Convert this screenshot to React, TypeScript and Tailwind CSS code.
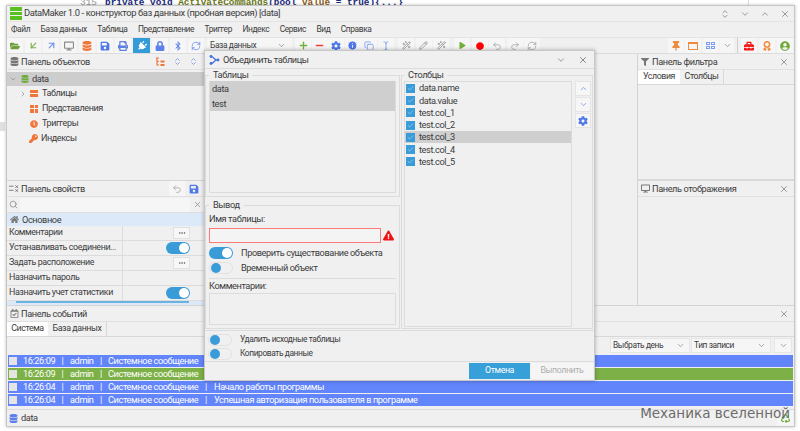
// DataMaker — главное окно и диалог "Объединить таблицы"
import type { ReactNode } from "react";
import {
  ArrowDownLeft,
  ArrowUpRight,
  Check,
  ChevronDown,
  ChevronRight,
  ChevronUp,
  ChevronsUpDown,
  Copy,
  Ellipsis,
  Info,
  Minus,
  Pencil,
  Plus,
  Redo2,
  RefreshCw,
  Search,
  TextCursor,
  Undo2,
  WandSparkles,
  X,
} from "lucide-react";
import {
  FaBluetoothB,
  FaClock,
  FaCog,
  FaDatabase,
  FaDesktop,
  FaExclamationTriangle,
  FaFilter,
  FaFolderOpen,
  FaHome,
  FaKey,
  FaLock,
  FaPlay,
  FaPlug,
  FaPrint,
  FaRecycle,
  FaRegCalendarCheck,
  FaSave,
  FaThumbtack,
  FaToolbox,
  FaUserCircle,
  FaAward,
  FaCircle,
} from "react-icons/fa";

const MENU = ["Файл", "База данных", "Таблица", "Представление", "Триггер", "Индекс", "Сервис", "Вид", "Справка"];
const PROPS: Array<{ label: string; kind?: "more" | "on" }> = [
  { label: "Комментарии", kind: "more" },
  { label: "Устанавливать соединени...", kind: "on" },
  { label: "Задать расположение", kind: "more" },
  { label: "Назначить пароль" },
  { label: "Назначить учет статистики", kind: "on" },
];
const EVENTS = [
  { time: "16:26:09", text: "", color: "bg-[#6285fc]" },
  { time: "16:26:09", text: "", color: "bg-[#7db046]" },
  { time: "16:26:04", text: "Начало работы программы", color: "bg-[#6285fc]" },
  { time: "16:26:04", text: "Успешная авторизация пользователя в программе", color: "bg-[#6285fc]" },
];
const COLUMNS = ["data.name", "data.value", "test.col_1", "test.col_2", "test.col_3", "test.col_4", "test.col_5"];

// значок объединения: две линии сходятся в одну
function JoinIcon() {
  return (
    <svg width="11" height="10" viewBox="0 0 11 10" fill="none">
      <path d="M2 1.5 C5 1.5 5 5 8 5 C5 5 5 8.5 2 8.5" stroke="#3f6fe0" strokeWidth="1.2" />
      <circle cx="2" cy="1.5" r="1.4" fill="#3f6fe0" />
      <circle cx="2" cy="8.5" r="1.4" fill="#3f6fe0" />
      <circle cx="9" cy="5" r="1.4" fill="#3f6fe0" />
    </svg>
  );
}

function TreeIcon() {
  return (
    <svg width="11" height="10" viewBox="0 0 11 10" fill="none" stroke="#f2763a" strokeWidth="1.2">
      <path d="M1 1h3M2 1v7h2M2 4.5h2" />
      <rect x="5.5" y="3.5" width="4" height="2" fill="#f2763a" stroke="none" />
      <rect x="5.5" y="7" width="4" height="2" fill="#f2763a" stroke="none" />
    </svg>
  );
}

function PropsIcon() {
  return (
    <svg width="11" height="9" viewBox="0 0 11 9" fill="none" stroke="#777" strokeWidth="1">
      <path d="M0 2h5M0 6.5h5M7 1l3 3M10 1l-3 3M7 5.5l3 2.5M10 5.5l-3 2.5" />
    </svg>
  );
}

function Btn({ children, wide }: { children?: ReactNode; wide?: boolean }) {
  return (
    <div className={`${wide ? "w-[17px] bg-[#359bd8]" : "w-[16px] bg-[#f6f6f6]"} h-[15px] shrink-0 flex items-center justify-center`}>
      {children}
    </div>
  );
}

function PanelHeader({ icon, title, children }: { icon: ReactNode; title: string; children?: ReactNode }) {
  return (
    <div className="h-[16px] shrink-0 flex items-center pl-[2px] pr-[5px] gap-[2px] border-b border-[#e0e0e0]">
      <span className="w-[10px] flex justify-center">{icon}</span>
      <span className="flex-1">{title}</span>
      {children}
    </div>
  );
}

function Toggle({ on }: { on?: boolean }) {
  return on ? (
    <div className="w-[24px] h-[12px] rounded-full bg-[#3a9bd9] flex items-center justify-end pr-px shrink-0">
      <div className="w-[10px] h-[10px] rounded-full bg-white" />
    </div>
  ) : (
    <div className="w-[24px] h-[12px] rounded-full border border-[#e2e2e2] flex items-center pl-px shrink-0">
      <div className="w-[10px] h-[10px] rounded-full bg-[#3a9bd9]" />
    </div>
  );
}

function Tabs({ items }: { items: Array<[string, string]> }) {
  return (
    <div className="h-[15px] shrink-0 flex border-b border-[#d8d8d8] text-[8.8px]">
      {items.map(([label, w], i) => (
        <div
          key={label}
          style={{ width: w }}
          className={`flex items-center justify-center ${i === 0 ? "bg-white" : "border-r border-[#d8d8d8]"}`}
        >
          {label}
        </div>
      ))}
    </div>
  );
}

function Toolbar() {
  return (
    <div className="h-[16px] shrink-0 flex items-center pr-[1px] border-b border-[#dcdcdc]">
      <div className="flex gap-[2px]">
        <Btn><FaFolderOpen size={10} color="#6f9e3c" /></Btn>
        <Btn><ArrowDownLeft size={11} color="#7fb04a" strokeWidth={2.5} /></Btn>
        <Btn><ArrowUpRight size={11} color="#6d8ff0" strokeWidth={2.5} /></Btn>
        <Btn><FaDesktop size={10} color="#8a8a8a" /></Btn>
        <Btn><FaDatabase size={10} color="#f2763a" /></Btn>
        <Btn><FaSave size={10} color="#4f78e8" /></Btn>
        <Btn><FaPrint size={10} color="#5f80e0" /></Btn>
        <Btn wide><FaPlug size={10} color="white" className="rotate-45" /></Btn>
        <Btn><FaLock size={10} color="#5f80e8" /></Btn>
        <Btn><FaBluetoothB size={10} color="#5f80e8" /></Btn>
        <Btn><RefreshCw size={10} color="#6d8ff0" /></Btn>
      </div>
      <div className="ml-[3px] w-[85px] h-[15px] bg-[#f6f6f6] flex items-center justify-between pl-[3px] pr-[6px] text-[8.4px]">
        <span>База данных</span>
        <ChevronDown size={9} color="#888" />
      </div>
      <div className="ml-[3px] flex gap-[0.5px]">
        <Btn><Plus size={11} color="#74b03c" strokeWidth={3} /></Btn>
        <Btn><Minus size={11} color="#ee4040" strokeWidth={3} /></Btn>
        <Btn><FaCog size={10} color="#4f78e8" /></Btn>
        <Btn><Info size={11} color="white" fill="#4f78e8" /></Btn>
        <Btn><Copy size={10} color="#7d9ef0" /></Btn>
        <Btn><TextCursor size={10} color="#7d9ef0" /></Btn>
      </div>
      <div className="ml-[4.5px] flex gap-[1.5px]">
        <Btn><WandSparkles size={9} color="#8c8c8c" /></Btn>
        <Btn><Pencil size={9} color="#8c8c8c" /></Btn>
        <Btn><WandSparkles size={9} color="#8c8c8c" /></Btn>
      </div>
      <div className="ml-[5px] flex gap-[1.5px]">
        <Btn><FaPlay size={7} color="#74b03c" /></Btn>
        <Btn><FaCircle size={8} color="#f00" /></Btn>
        <Btn><Undo2 size={10} color="#a8a8a8" /></Btn>
        <Btn><Redo2 size={10} color="#a8a8a8" /></Btn>
        <Btn><RefreshCw size={10} color="#a8a8a8" /></Btn>
      </div>
      <div className="flex-1" />
      <div className="flex gap-[1.5px]">
        <Btn><FaThumbtack size={10} color="#f08a3c" /></Btn>
        <Btn><div className="w-[10px] h-[8px] border border-[#f08a3c] border-t-[2px]" /></Btn>
        <Btn>
          <div className="grid grid-cols-2 gap-px">
            <div className="w-[4px] h-[3px] border border-[#7d9ef0]" />
            <div className="w-[4px] h-[3px] border border-[#7d9ef0]" />
            <div className="w-[4px] h-[3px] border border-[#7d9ef0]" />
            <div className="w-[4px] h-[3px] border border-[#7d9ef0]" />
          </div>
        </Btn>
        <div className="w-[14px] h-[15px] bg-[#f6f6f6] flex items-center justify-center"><ChevronDown size={9} color="#888" /></div>
      </div>
      <div className="mx-[3px] w-px h-[15px] bg-[#cfcfcf]" />
      <div className="flex gap-[2px]">
        <Btn><FaToolbox size={10} color="#f01818" /></Btn>
        <Btn><FaAward size={10} color="#f08a3c" /></Btn>
        <Btn><FaUserCircle size={10} color="#6faa3a" /></Btn>
      </div>
    </div>
  );
}

function ObjectsPanel() {
  return (
    <div className="h-[127px] shrink-0 flex flex-col border-b border-[#d4d4d4]">
      <PanelHeader icon={<FaDatabase size={9} color="#777" />} title="Панель объектов">
        <div className="flex items-center gap-[7px] pr-[1px]">
          <TreeIcon />
          <ChevronsUpDown size={9} color="#6d8ff0" />
          <ChevronsUpDown size={9} color="#6d8ff0" />
        </div>
      </PanelHeader>
      <div className="flex items-center h-[14px] bg-[#cdcdcd] mt-[2px] pl-[2px] gap-[4px]">
        <ChevronDown size={8} color="#888" />
        <FaDatabase size={8} color="#6faa3a" />
        <span className="ml-[-1px]">data</span>
      </div>
      <div className="flex flex-col pl-[12px] text-[9px]">
        <div className="h-[15px] flex items-center gap-[3px]">
          <ChevronRight size={8} color="#888" />
          <div className="w-[8px] h-[7px] flex flex-col gap-px">
            <div className="flex-1 bg-[#f2763a]" />
            <div className="flex-1 bg-[#f2763a]" />
          </div>
          <span className="ml-[1px]">Таблицы</span>
        </div>
        <div className="h-[15px] flex items-center gap-[4px] pl-[11px]">
          <div className="w-[8px] h-[8px] grid grid-cols-2 gap-px">
            <div className="bg-[#f2763a]" />
            <div className="bg-[#f2763a]" />
            <div className="bg-[#f2763a]" />
            <div className="bg-[#f2763a]" />
          </div>
          <span>Представления</span>
        </div>
        <div className="h-[15px] flex items-center gap-[4px] pl-[11px]">
          <FaClock size={8} color="#f2763a" />
          <span>Триггеры</span>
        </div>
        <div className="h-[15px] flex items-center gap-[3px] pl-[10px]">
          <FaKey size={9} color="#f2763a" />
          <span>Индексы</span>
        </div>
      </div>
    </div>
  );
}

function PropsPanel() {
  return (
    <div className="flex-1 flex flex-col overflow-hidden">
      <PanelHeader icon={<PropsIcon />} title="Панель свойств">
        <div className="w-[16px] h-[15px] bg-[#f6f6f6] flex items-center justify-center mr-[2px]"><Undo2 size={10} color="#a8a8a8" /></div>
        <FaSave size={10} color="#4f78e8" />
      </PanelHeader>
      <div className="h-[16px] shrink-0 flex items-center border-b border-[#dedede]">
        <div className="w-[13px] flex justify-center"><Search size={9} color="#888" /></div>
        <div className="flex-1 h-[14px] bg-[#f6f6f6]" />
        <div className="w-[14px] flex justify-center"><X size={9} color="#888" /></div>
      </div>
      <div className="h-[13px] shrink-0 flex items-center gap-[3px] bg-[#dbe9f8] pl-[3px]">
        <FaHome size={9} color="#777" />
        <span>Основное</span>
      </div>
      {PROPS.map((p) => (
        <div key={p.label} className="h-[15px] shrink-0 flex border-b border-[#dcdcdc] text-[8.9px]">
          <div className="w-[116px] pl-[2px] border-r border-[#dcdcdc] flex items-center overflow-hidden">{p.label}</div>
          <div className="flex-1 flex items-center justify-end pr-[14px]">
            {p.kind === "more" && (
              <div className="w-[17px] h-[12px] bg-[#f7f7f7] border border-[#e0e0e0] flex items-center justify-center">
                <Ellipsis size={8} color="#555" />
              </div>
            )}
            {p.kind === "on" && <Toggle on />}
          </div>
        </div>
      ))}
      <div className="h-[5px] bg-[#dbe9f8] pl-[9px] pr-[15px]">
        <div className="h-[2px] bg-[#6db3e2]" />
      </div>
    </div>
  );
}

function EventsPanel() {
  return (
    <div className="h-[104px] shrink-0 flex flex-col border-t border-[#d4d4d4]">
      <PanelHeader icon={<FaRegCalendarCheck size={9} color="#777" />} title="Панель событий">
        <X size={10} color="#888" />
      </PanelHeader>
      <Tabs items={[["Система", "41px"], ["База данных", "59px"]]} />
      <div className="h-[17px] shrink-0 flex items-center justify-end pr-[2px] gap-[1px] text-[8.4px]">
        <div className="w-[80px] h-[15px] bg-[#f6f6f6] border border-[#e6e6e6] flex items-center justify-between pl-[2px] pr-[4px]">
          <span>Выбрать день</span>
          <ChevronDown size={9} color="#888" />
        </div>
        <div className="w-[80px] h-[15px] bg-[#f6f6f6] border border-[#e6e6e6] flex items-center justify-between pl-[2px] pr-[4px]">
          <span>Тип записи</span>
          <ChevronDown size={9} color="#888" />
        </div>
        <div className="ml-[2px] w-[18px] h-[15px] bg-[#f6f6f6] border border-[#e6e6e6] flex items-center justify-center">
          <ChevronDown size={9} color="#888" />
        </div>
      </div>
      <div className="flex flex-col gap-[1px] px-[1px] mt-[1px]">
        {EVENTS.map((e, i) => (
          <div key={i} className={`h-[12px] flex items-center text-white ${e.color}`}>
            <div className="ml-[1px] w-[8px] h-[8px] bg-[#e4e4e4]" />
            <span className="ml-[6px] w-[38px]">{e.time}</span>
            <span className="w-[3px] text-center">|</span>
            <span className="ml-[6px] w-[28px]">admin</span>
            <span className="w-[6px] text-center">|</span>
            <span className="ml-[4px] w-[95px]">Системное сообщение</span>
            {e.text && <span className="w-[6px] text-center">|</span>}
            {e.text && <span className="ml-[5px]">{e.text}</span>}
          </div>
        ))}
      </div>
    </div>
  );
}

function FilterColumn() {
  return (
    <div className="w-[157px] shrink-0 flex flex-col border-l border-[#d4d4d4]">
      <div className="h-[127px] shrink-0 flex flex-col">
        <PanelHeader icon={<FaFilter size={8} color="#777" />} title="Панель фильтра">
          <X size={10} color="#888" />
        </PanelHeader>
        <Tabs items={[["Условия", "42px"], ["Столбцы", "44px"]]} />
        <div className="flex-1 border-b-2 border-[#d8d8d8]" />
      </div>
      <PanelHeader icon={<FaDesktop size={9} color="#777" />} title="Панель отображения">
        <X size={10} color="#888" />
      </PanelHeader>
    </div>
  );
}

function JoinDialog() {
  return (
    <div className="absolute left-[204px] top-[50px] w-[391px] h-[331px] bg-[#f0f0f0] border border-[#c8c8c8] shadow-[0_0_4px_rgba(0,0,0,0.3)] flex flex-col text-[#3c3c3c]">
      <div className="h-[18px] shrink-0 flex items-center pl-[4px] pr-[6px] gap-[3px] border-b border-[#dcdcdc]">
        <JoinIcon />
        <span className="flex-1">Объединить таблицы</span>
        <ChevronDown size={10} color="#888" className="mr-[9px]" />
        <X size={10} color="#777" />
      </div>
      <div className="h-[260px] shrink-0 flex pr-[1px] gap-[1px]">
        <div className="w-[195px] shrink-0 flex flex-col gap-[2px]">
          <fieldset className="h-[128px] border border-[#dcdcdc] px-[3px] pb-[3px] min-w-0">
            <legend className="px-[4px] h-[12px] leading-[12px]">Таблицы</legend>
            <div className="h-[112px] border border-t-0 border-[#dcdcdc] bg-[#f0f0f0]">
              <div className="h-[15px] bg-[#cfcfcf] pl-[2px] flex items-center">data</div>
              <div className="h-[15px] bg-[#cfcfcf] pl-[2px] flex items-center">test</div>
            </div>
          </fieldset>
          <fieldset className="h-[130px] border border-[#dcdcdc] px-[3px] min-w-0">
            <legend className="px-[4px] h-[12px] leading-[12px]">Вывод</legend>
            <div className="mt-[1px] h-[13px] flex items-center">Имя таблицы:</div>
            <div className="mt-[3px] flex items-center gap-[2px]">
              <div className="w-[172px] h-[15px] border border-[#fb7a7a] bg-[#f4f4f4]" />
              <FaExclamationTriangle size={11} color="#ee1111" />
            </div>
            <div className="mt-[3px] h-[13px] flex items-center gap-[8px]">
              <Toggle on />
              <span>Проверить существование объекта</span>
            </div>
            <div className="mt-[2px] h-[13px] flex items-center gap-[8px]">
              <Toggle />
              <span>Временный объект</span>
            </div>
            <div className="mt-[4px] border-t border-[#dcdcdc] h-[15px] flex items-center">Комментарии:</div>
            <div className="h-[32px] border border-[#dcdcdc]" />
          </fieldset>
        </div>
        <fieldset className="flex-1 border border-[#dcdcdc] pl-[2px] pr-[1px] min-w-0">
          <legend className="px-[4px] h-[12px] leading-[12px]">Столбцы</legend>
          <div className="flex gap-[3px]">
            <div className="w-[168px] h-[246px] border border-[#dcdcdc] flex flex-col">
              {COLUMNS.map((c) => (
                <div key={c} className={`h-[12.3px] flex items-center gap-[4px] pl-[1px] ${c === "test.col_3" ? "bg-[#cfcfcf]" : ""}`}>
                  <div className="w-[9px] h-[9px] bg-[#3a9bd9] flex items-center justify-center">
                    <Check size={7} color="#bfe0f5" />
                  </div>
                  <span>{c}</span>
                </div>
              ))}
            </div>
            <div className="flex flex-col gap-[1px]">
              <div className="w-[16px] h-[15px] bg-[#f6f6f6] border border-[#e4e4e4] flex items-center justify-center"><ChevronUp size={9} color="#6d8ff0" /></div>
              <div className="w-[16px] h-[15px] bg-[#f6f6f6] border border-[#e4e4e4] flex items-center justify-center"><ChevronDown size={9} color="#6d8ff0" /></div>
              <div className="w-[16px] h-[15px] bg-[#f6f6f6] border border-[#e4e4e4] flex items-center justify-center"><FaCog size={10} color="#4f78e8" /></div>
            </div>
          </div>
        </fieldset>
      </div>
      <div className="mt-[1px] flex-1 border-t border-[#dcdcdc] flex flex-col text-[8.4px]">
        <div className="mt-[2px] h-[13px] flex items-center gap-[8px] pl-[3px]">
          <Toggle />
          <span>Удалить исходные таблицы</span>
        </div>
        <div className="mt-[1px] h-[13px] flex items-center gap-[8px] pl-[3px]">
          <Toggle />
          <span>Копировать данные</span>
        </div>
        <div className="mt-[1px] border-t border-[#dcdcdc] flex-1 flex items-end justify-end pr-[1px] pb-[1px] gap-[1px] text-[8.8px]">
          <div className="w-[61px] h-[16px] bg-[#37a0d9] text-white flex items-center justify-center">Отмена</div>
          <div className="w-[62px] h-[16px] bg-[#f5f5f5] text-[#b0b0b0] flex items-center justify-center">Выполнить</div>
        </div>
      </div>
    </div>
  );
}

export default function App() {
  return (
    <div className="relative w-[800px] h-[431px] overflow-hidden bg-white font-['Roboto','Noto_Sans',sans-serif] text-[9.2px] tracking-[-0.4px] text-[#3c3c3c] whitespace-nowrap">
      {/* код за окном */}
      <div className="flex items-start h-[5px] overflow-hidden font-['Liberation_Mono',monospace] text-[9.4px] tracking-normal leading-[5px] pl-[80px]">
        <span className="text-[#999] w-[25px]">315</span>
        <span className="font-bold text-[#1b2a7a]">private void <span className="text-[#6b7a20]">ActivateCommands</span>(bool <span className="text-[#8a5a20]">value</span> = true)&#123;...&#125;</span>
      </div>
      <div className="absolute left-[748px] top-0 w-px h-[5px] bg-[#dcdcdc]" />
      <div className="absolute left-0 top-[122px] w-[5px] h-[9px] bg-[#e0e0e0]" />

      {/* главное окно */}
      <div className="absolute left-[6px] top-[5px] w-[789px] h-[422px] bg-[#f0f0f0] border border-[#c6c6c6] shadow-[0_0_3px_rgba(0,0,0,0.25)] flex flex-col">
        <div className="h-[16px] shrink-0 flex items-center pl-[3px] pr-[4px] border-b border-[#e4e4e4] text-[9.4px]">
          <div className="w-[12px] h-[13px] flex flex-col gap-px">
            <div className="flex-1 bg-[#58c020]" />
            <div className="flex-1 bg-[#58c020]" />
            <div className="flex-1 bg-[#58c020]" />
          </div>
          <span className="ml-[2px] flex-1">DataMaker 1.0 - конструктор баз данных (пробная версия) [data]</span>
          <div className="flex items-center gap-[10px]">
            <ChevronsUpDown size={10} color="#888" />
            <ChevronDown size={10} color="#888" />
            <ChevronUp size={10} color="#888" />
            <X size={10} color="#888" />
          </div>
        </div>
        <div className="h-[16px] shrink-0 flex items-center pl-[4px] gap-[10.5px] border-b border-[#e4e4e4] text-[8.4px]">
          {MENU.map((m) => (
            <span key={m}>{m}</span>
          ))}
        </div>
        <Toolbar />
        <div className="flex-1 flex min-h-0">
          <div className="w-[198px] shrink-0 flex flex-col border-r border-[#d4d4d4]">
            <ObjectsPanel />
            <PropsPanel />
          </div>
          <div className="flex-1" />
          <FilterColumn />
        </div>
        <EventsPanel />
        <div className="h-[17px] shrink-0 flex items-center gap-[3px] pl-[2px] border-t border-[#dcdcdc]">
          <FaDatabase size={9} color="#5f80e8" />
          <span className="flex-1">data</span>
          <div className="w-[16px] h-[15px] mr-[1px] bg-[#f6f6f6] flex items-center justify-center">
            <FaRecycle size={9} color="#6faa3a" />
          </div>
        </div>
      </div>

      <JoinDialog />

      {/* водяной знак */}
      <div className="absolute right-[10px] top-[405px] text-[13.5px] tracking-normal leading-[16px] text-[#6b6b6b] font-['DejaVu_Sans',sans-serif]">
        Механика вселенной
      </div>
    </div>
  );
}
